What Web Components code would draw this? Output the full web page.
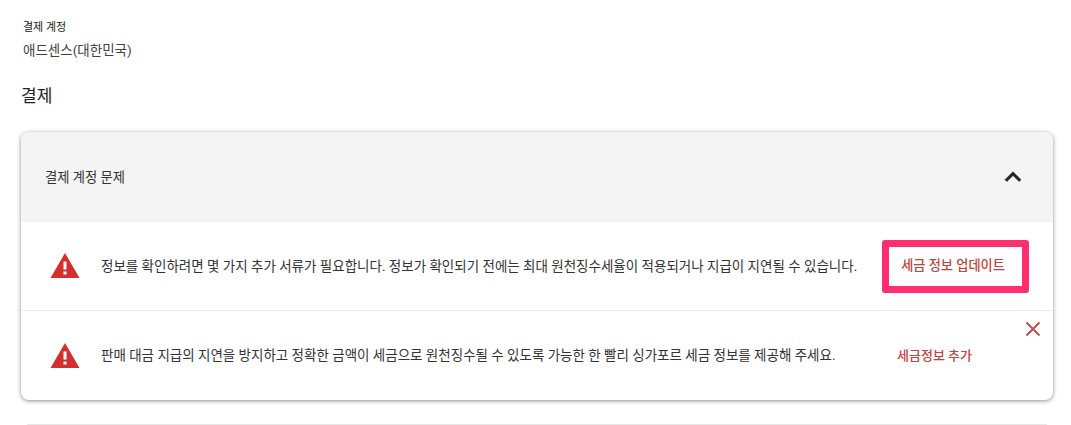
<!DOCTYPE html>
<html lang="ko">
<head>
<meta charset="utf-8">
<title>결제</title>
<style>
  html, body { margin: 0; background: #fff; overflow: hidden; }
  body { font-family: Roboto, "Noto Sans CJK KR", sans-serif; color: #212121; height: 425px; }
</style>
</head>
<body>
<billing-page>
  <account-info label="결제 계정" value="애드센스(대한민국)"></account-info>
  <section-title>결제</section-title>
  <issue-panel heading="결제 계정 문제">
    <issue-row action="세금 정보 업데이트" highlight>정보를 확인하려면 몇 가지 추가 서류가 필요합니다. 정보가 확인되기 전에는 최대 원천징수세율이 적용되거나 지급이 지연될 수 있습니다.</issue-row>
    <issue-row action="세금정보 추가" closable>판매 대금 지급의 지연을 방지하고 정확한 금액이 세금으로 원천징수될 수 있도록 가능한 한 빨리 싱가포르 세금 정보를 제공해 주세요.</issue-row>
  </issue-panel>
</billing-page>
<script>
// 页面容器
class BillingPage extends HTMLElement {
  constructor() {
    super();
    this.attachShadow({ mode: 'open' });
    this.shadowRoot.innerHTML = `
      <style>
        :host { display: flex; flex-direction: column; height: 425px; box-sizing: border-box; padding: 21px 18px 0 21px; }
        #rule { height: 1px; background: #e8e8e8; margin: 24px 6px 0 6px; flex: none; }
      </style>
      <slot></slot>
      <div id="rule"></div>
    `;
  }
}
customElements.define('billing-page', BillingPage);

class AccountInfo extends HTMLElement {
  constructor() {
    super();
    this.attachShadow({ mode: 'open' });
    this.shadowRoot.innerHTML = `
      <style>
        :host { display: block; padding-left: 2px; }
        #label { font-size: 11px; line-height: 14px; color: #212121; }
        #value { font-size: 13.5px; line-height: 20px; margin-top: 5px; color: #424242; }
      </style>
      <div id="label">${this.getAttribute('label')}</div>
      <div id="value">${this.getAttribute('value')}</div>
    `;
  }
}
customElements.define('account-info', AccountInfo);

class SectionTitle extends HTMLElement {
  constructor() {
    super();
    this.attachShadow({ mode: 'open' });
    this.shadowRoot.innerHTML = `
      <style>
        :host { display: block; font-size: 17px; line-height: 24px; margin-top: 24px; margin-bottom: 24px; color: #212121; }
      </style>
      <slot></slot>
    `;
  }
}
customElements.define('section-title', SectionTitle);

class IssuePanel extends HTMLElement {
  constructor() {
    super();
    this.attachShadow({ mode: 'open' });
    this.shadowRoot.innerHTML = `
      <style>
        :host { display: block; border-radius: 8px; background: #fff; box-shadow: 0 1px 4px rgba(0,0,0,.45); overflow: hidden; flex: none; }
        #head { display: flex; align-items: center; justify-content: space-between; height: 90px; padding: 0 24px 0 24px; background: #f4f4f4; font-size: 13.3px; color: #333; }
        #title { margin-bottom: 1px; }
        svg { display: block; width: 32px; height: 32px; }
      </style>
      <div id="head">
        <span id="title">${this.getAttribute('heading')}</span>
        <svg viewBox="0 0 24 24"><path fill="#212121" d="M7.410 15.410 12 10.830l4.590 4.580L18 14l-6-6-6 6z" stroke="#212121" stroke-width=".4"/></svg>
      </div>
      <slot></slot>
    `;
  }
}
customElements.define('issue-panel', IssuePanel);

class IssueRow extends HTMLElement {
  constructor() {
    super();
    this.attachShadow({ mode: 'open' });
    const action = this.getAttribute('action');
    const close = this.hasAttribute('closable');
    this.shadowRoot.innerHTML = `
      <style>
        :host { display: block; position: relative; }
        #row { display: flex; align-items: center; height: 88px; padding-left: 28px; }
        :host([closable]) #row { height: 89px; border-top: 1px solid #ececec; }
        #warn { width: 32px; height: 32px; flex: none; display: block; }
        #text { margin-left: 20px; font-size: 13.5px; line-height: 20px; color: #333; white-space: nowrap; flex: 1; }
        :host([closable]) #text { margin-bottom: 2px; }
        #action { font-size: 13px; font-weight: 500; color: #c0453e; white-space: nowrap; box-sizing: border-box; }
        :host([highlight]) #action { font-size: 13.2px; width: 147px; height: 53px; margin-right: 24px; padding: 0 5px 3px 0; display: flex; align-items: center; justify-content: center; border: 7px solid #ff2e6e; border-radius: 3px; }
        :host([closable]) #action { margin-right: 81px; margin-bottom: 3px; }
        #close { position: absolute; top: 9px; right: 10px; width: 20px; height: 20px; }
      </style>
      <div id="row">
        <svg id="warn" viewBox="0 0 32 32"><path fill="#d32f2f" d="M16 3 30.500 28H1.500z"/><rect x="14.500" y="11.500" width="3" height="8" fill="#fff"/><rect x="14.500" y="21.500" width="3" height="3" fill="#fff"/></svg>
        <div id="text"><slot></slot></div>
        <div id="action">${action}</div>
      </div>
      ${close ? '<svg id="close" viewBox="0 0 20 20"><path stroke="#c0504a" stroke-width="2" fill="none" d="M3.500 3.500l13 13M16.500 3.500l-13 13"/></svg>' : ''}
    `;
  }
}
customElements.define('issue-row', IssueRow);
</script>
</body>
</html>
